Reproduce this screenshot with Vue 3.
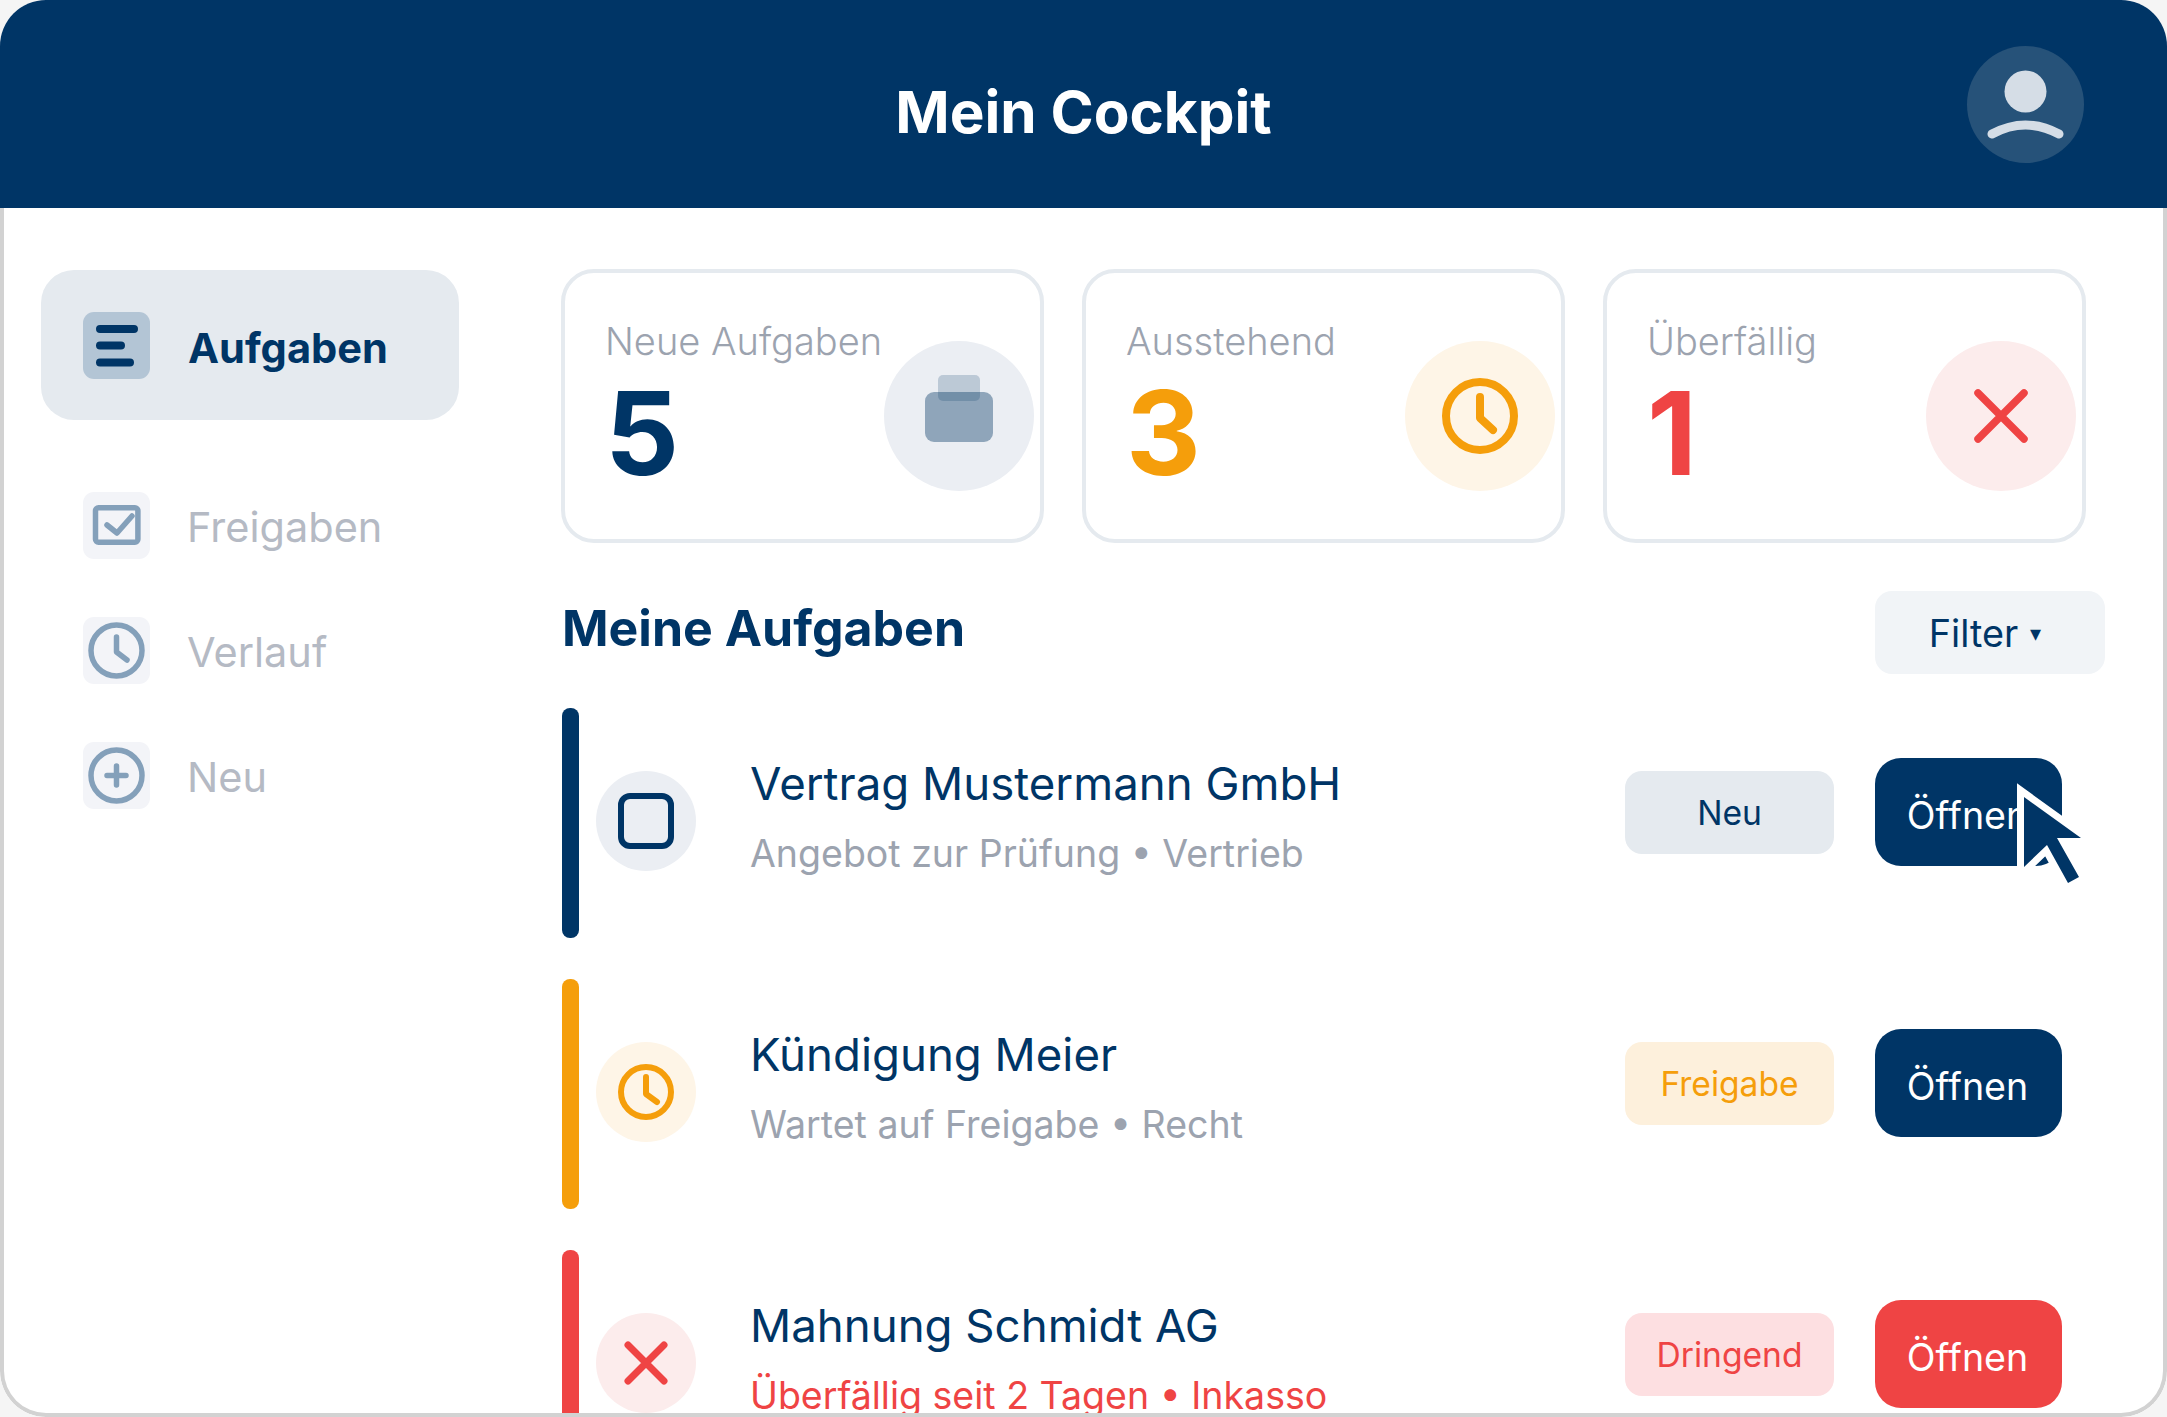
<script setup>
const navItems = [
  { label: 'Freigaben', icon: 'check' },
  { label: 'Verlauf', icon: 'clock' },
  { label: 'Neu', icon: 'plus' }
];

const stats = [
  { label: 'Neue Aufgaben', value: '5', tone: 'navy', icon: 'case' },
  { label: 'Ausstehend', value: '3', tone: 'orange', icon: 'clock' },
  { label: 'Überfällig', value: '1', tone: 'red', icon: 'cross' }
];

const tasks = [
  { title: 'Vertrag Mustermann GmbH', sub: 'Angebot zur Prüfung • Vertrieb', badge: 'Neu', tone: 'navy', icon: 'square' },
  { title: 'Kündigung Meier', sub: 'Wartet auf Freigabe • Recht', badge: 'Freigabe', tone: 'orange', icon: 'clock' },
  { title: 'Mahnung Schmidt AG', sub: 'Überfällig seit 2 Tagen • Inkasso', badge: 'Dringend', tone: 'red', icon: 'cross' }
];
</script>

<template>
  <div class="frame">
    <header class="top">
      <h1>Mein Cockpit</h1>
      <div class="avatar">
        <svg width="117" height="117" viewBox="0 0 117 117">
          <circle cx="58.5" cy="45.5" r="21" fill="#d5dde6" />
          <path d="M25 88 Q58.5 70 92 88" fill="none" stroke="#d5dde6" stroke-width="9" stroke-linecap="round" />
        </svg>
      </div>
    </header>

    <div class="content">
      <aside class="side">
        <div class="nav-active">
          <span class="nav-icon active-icon">
            <svg width="67" height="67" viewBox="0 0 67 67">
              <path d="M17 17H51M17 33.5H38M17 50.5H47" fill="none" stroke="#003566" stroke-width="8" stroke-linecap="round" />
            </svg>
          </span>
          <span class="nav-text">Aufgaben</span>
        </div>
        <div v-for="item in navItems" :key="item.label" class="nav-item">
          <span class="nav-icon">
            <svg width="67" height="67" viewBox="0 0 67 67" fill="none" stroke="#84a0ba" stroke-width="5.5" stroke-linecap="round" stroke-linejoin="round">
              <template v-if="item.icon === 'check'">
                <rect x="12.5" y="15.7" width="42.4" height="34.6" rx="3" />
                <path d="M24 33L34 41L49 24" />
              </template>
              <template v-else-if="item.icon === 'clock'">
                <circle cx="33.5" cy="33.5" r="25.5" />
                <path d="M33.5 20V35L44 43" />
              </template>
              <template v-else>
                <circle cx="33.5" cy="33.5" r="25.5" />
                <path d="M33.5 24V43M24 33.5H43" />
              </template>
            </svg>
          </span>
          <span class="nav-text">{{ item.label }}</span>
        </div>
      </aside>

      <main class="main">
        <section class="stats">
          <div v-for="s in stats" :key="s.label" class="stat">
            <div class="stat-label">{{ s.label }}</div>
            <div class="stat-value" :class="s.tone">{{ s.value }}</div>
            <div class="stat-circle" :class="'bg-' + s.tone">
              <svg v-if="s.icon === 'case'" class="case" width="76" height="70" viewBox="0 0 76 70">
                <rect x="4" y="17" width="68" height="50" rx="9" fill="#8fa5ba" />
                <rect x="17" y="0" width="42" height="26" rx="5" fill="#003566" fill-opacity="0.2" />
              </svg>
              <svg v-else-if="s.icon === 'clock'" width="78" height="78" viewBox="0 0 78 78" fill="none" stroke="#f59e0b" stroke-width="8" stroke-linecap="round" stroke-linejoin="round">
                <circle cx="39" cy="39" r="34" />
                <path d="M39 20V41L52 53" />
              </svg>
              <svg v-else width="58" height="58" viewBox="0 0 58 58" fill="none" stroke="#ef4444" stroke-width="7.5" stroke-linecap="round">
                <path d="M6 6L52 52M52 6L6 52" />
              </svg>
            </div>
          </div>
        </section>

        <div class="list-head">
          <h2>Meine Aufgaben</h2>
          <div class="filter">Filter <span class="caret">▾</span></div>
        </div>

        <div v-for="(t, i) in tasks" :key="t.title" class="task">
          <div class="bar" :class="'solid-' + t.tone"></div>
          <div class="task-circle" :class="'bg-' + t.tone">
            <svg v-if="t.icon === 'square'" width="56" height="56" viewBox="0 0 56 56">
              <rect x="3" y="3" width="50" height="50" rx="9" fill="none" stroke="#003566" stroke-width="6" />
            </svg>
            <svg v-else-if="t.icon === 'clock'" width="56" height="56" viewBox="0 0 56 56" fill="none" stroke="#f59e0b" stroke-width="6" stroke-linecap="round" stroke-linejoin="round">
              <circle cx="28" cy="28" r="25" />
              <path d="M28 13V30L39 38" />
            </svg>
            <svg v-else width="46" height="46" viewBox="0 0 46 46" fill="none" stroke="#ef4444" stroke-width="7" stroke-linecap="round">
              <path d="M5 5L41 41M41 5L5 41" />
            </svg>
          </div>
          <div class="task-text">
            <div class="task-title">{{ t.title }}</div>
            <div class="task-sub" :class="{ urgent: t.tone === 'red' }">{{ t.sub }}</div>
          </div>
          <div class="badge" :class="'badge-' + t.tone">{{ t.badge }}</div>
          <div class="open" :class="'open-' + t.tone">
            Öffnen
            <svg v-if="i === 0" class="cursor" width="90" height="115" viewBox="0 0 90 115">
              <path d="M14 11L71 52H47L69 91L58 97L37 59L14 81Z" fill="#003566" stroke="#fff" stroke-width="14" stroke-miterlimit="6" paint-order="stroke" />
            </svg>
          </div>
        </div>
      </main>
    </div>
  </div>
</template>

<style>
html, body {
  margin: 0;
  background: #f5f5f5;
}
</style>

<style scoped>
.frame {
  position: relative;
  width: 2167px;
  height: 1417px;
  box-sizing: border-box;
  background: #fff;
  border-radius: 46px;
  overflow: hidden;
  font-family: Inter, "Liberation Sans", sans-serif;
  color: #003566;
}

/* Rahmen beginnt erst unter dem Kopf */
.frame::after {
  content: "";
  position: absolute;
  top: 208px;
  left: 0;
  right: 0;
  bottom: 0;
  box-sizing: border-box;
  border: 4px solid #d2d2d2;
  border-top: 0;
  border-radius: 0 0 46px 46px;
}

.top {
  position: relative;
  height: 208px;
  background: #003566;
  display: flex;
  align-items: center;
  justify-content: center;
}

.top h1 {
  margin: 0;
  color: #fff;
  font-size: 58.4px;
  font-weight: 700;
  line-height: 1;
  padding-top: 16px;
}

.avatar {
  position: absolute;
  left: 1967px;
  top: 46px;
  width: 117px;
  height: 117px;
  border-radius: 50%;
  background: #265279;
}

.avatar svg {
  display: block;
}

.content {
  display: flex;
  padding-top: 62px;
}

.side {
  width: 418px;
  margin-left: 41px;
  flex-shrink: 0;
}

.nav-active {
  height: 150px;
  border-radius: 33px;
  background: #e5eaef;
  display: flex;
  align-items: center;
  padding-left: 42px;
  font-size: 41.6px;
  font-weight: 700;
  margin-bottom: 72px;
}

.nav-active .nav-text {
  padding-top: 5px;
}

.nav-icon {
  width: 67px;
  height: 67px;
  border-radius: 11px;
  background: #f3f4f8;
  margin-right: 38px;
  flex-shrink: 0;
  display: block;
}

.nav-icon svg {
  display: block;
}

.active-icon {
  background: #b3c5d5;
}

.nav-item {
  height: 67px;
  margin-bottom: 58px;
  margin-left: 42px;
  display: flex;
  align-items: center;
  font-size: 41.5px;
  color: #b5bac4;
}

.nav-item .nav-icon {
  margin-right: 37px;
}

.nav-item .nav-text {
  padding-top: 2px;
}

.main {
  margin-left: 102px;
  width: 1544px;
  margin-top: -1px;
}

.stats {
  display: flex;
  gap: 38.5px;
}

.stat {
  position: relative;
  width: 482.5px;
  height: 274px;
  box-sizing: border-box;
  border: 4px solid #e5eaef;
  border-radius: 33px;
  padding: 46px 0 0 40px;
}

.stat-label {
  font-size: 38px;
  line-height: 44px;
  color: #9ca3af;
  font-weight: 300;
}

.stat-value {
  font-size: 116px;
  font-weight: 700;
  line-height: 116px;
  margin-top: 12px;
}

.navy { color: #003566; }
.orange { color: #f59e0b; }
.red { color: #ef4444; }

.stat-circle {
  position: absolute;
  right: 6px;
  top: 68px;
  width: 150px;
  height: 150px;
  border-radius: 50%;
  display: flex;
  align-items: center;
  justify-content: center;
}

.case {
  margin-bottom: 12px;
}

.bg-navy { background: #ebeef3; }
.bg-orange { background: #fef5e7; }
.bg-red { background: #fcecec; }

.list-head {
  display: flex;
  align-items: center;
  justify-content: space-between;
  height: 83px;
  margin: 48px 0 34px;
}

.list-head h2 {
  margin: 0 0 0 1px;
  font-size: 50px;
  font-weight: 700;
  padding-bottom: 10px;
}

.filter {
  width: 230px;
  height: 83px;
  box-sizing: border-box;
  padding-right: 10px;
  border-radius: 17px;
  background: #f1f4f7;
  display: flex;
  align-items: center;
  justify-content: center;
  gap: 12px;
  font-size: 37.8px;
}

.caret {
  font-size: 22px;
}

.task {
  display: flex;
  height: 230px;
  margin-bottom: 41px;
  padding-right: 43px;
}

.bar {
  width: 17px;
  height: 230px;
  border-radius: 8px;
  flex-shrink: 0;
  margin-left: 1px;
}

.solid-navy { background: #003566; }
.solid-orange { background: #f59e0b; }
.solid-red { background: #ef4444; }

.task-circle {
  width: 100px;
  height: 100px;
  border-radius: 50%;
  margin: 63px 0 0 17px;
  flex-shrink: 0;
  display: flex;
  align-items: center;
  justify-content: center;
}

.task-text {
  margin-left: 54px;
  padding-top: 48px;
  flex: 1;
}

.task-title {
  font-size: 45.6px;
  line-height: 56px;
}

.task-sub {
  font-size: 37.5px;
  line-height: 50px;
  margin-top: 17px;
  color: #9ca3af;
}

.urgent {
  color: #ef4444;
}

.badge {
  width: 209px;
  height: 83px;
  margin-top: 63px;
  border-radius: 17px;
  display: flex;
  align-items: center;
  justify-content: center;
  font-size: 33.6px;
}

.badge-navy { background: #e5eaef; color: #003566; }
.badge-orange { background: #fdf0dc; color: #f59e0b; }
.badge-red { background: #fddfe1; color: #ef4444; }

.open {
  position: relative;
  width: 187px;
  height: 108px;
  box-sizing: border-box;
  padding: 6px 2px 0 0;
  margin: 50px 0 0 41px;
  border-radius: 26px;
  display: flex;
  align-items: center;
  justify-content: center;
  color: #fff;
  font-size: 37.6px;
}

.open-navy, .open-orange { background: #003566; }
.open-red { background: #ef4444; }

.cursor {
  position: absolute;
  left: 135px;
  top: 28px;
  overflow: visible;
}
</style>
